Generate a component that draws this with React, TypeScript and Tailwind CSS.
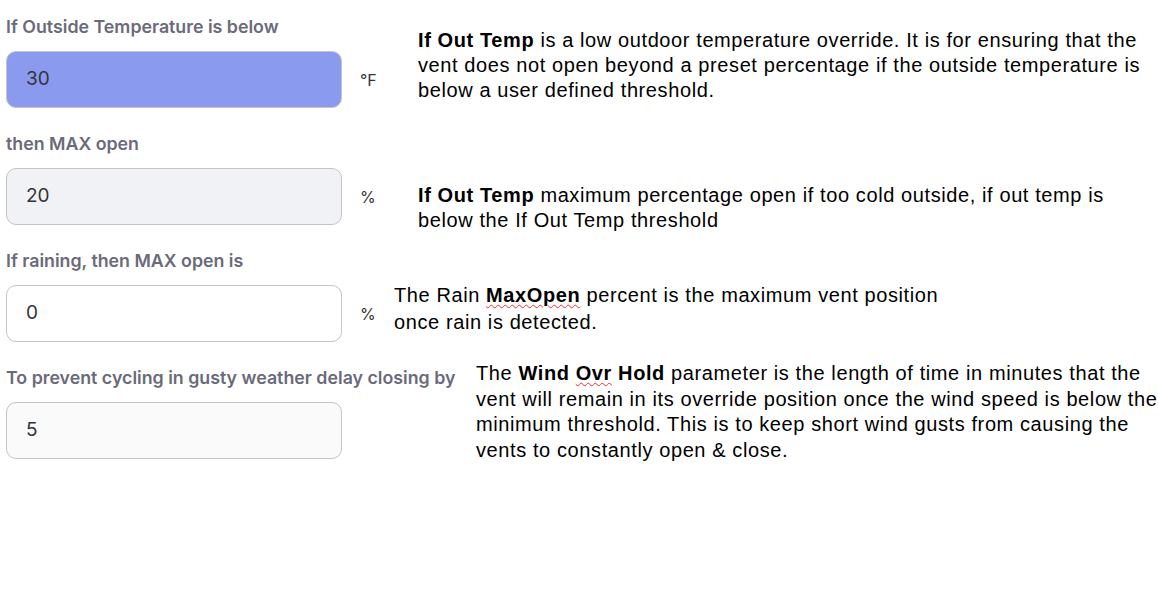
import React from 'react';

// Vent override settings with help notes beside each field
const inter = { fontFamily: 'Inter, "Noto Sans", sans-serif' };
const arial = { fontFamily: '"Liberation Sans", Arial, sans-serif' };

const Field = ({ label, value, unit, bg }: { label: string; value: string; unit?: string; bg: string }) => (
  <div style={inter}>
    <div className="text-[17.8px] leading-[20px] font-semibold text-[#6b6a7b] whitespace-nowrap">{label}</div>
    <div className="flex items-center mt-[14px]">
      <div className={`w-[336px] h-[57px] rounded-[10px] border border-[#c3c3c8] ${bg} flex items-center pl-[19px] text-[19px] text-[#333338]`}>
        {value}
      </div>
      {unit && <span className="ml-[18px] text-[16px] text-[#333338]">{unit}</span>}
    </div>
  </div>
);

const Wavy = ({ children }: { children: React.ReactNode }) => (
  <span className="underline decoration-wavy decoration-red-500 decoration-1 underline-offset-[2px]">{children}</span>
);

const note = 'text-[20px] tracking-[0.6px] text-black whitespace-nowrap';

export default function App() {
  return (
    <div className="w-[1158px] h-[615px] bg-white pl-[6px] pt-[17px]">
      {/* outside temp */}
      <div className="flex h-[91px]">
        <div className="w-[412px] shrink-0">
          <Field label="If Outside Temperature is below" value="30" unit="°F" bg="bg-[#8a9bef]" />
        </div>
        <p style={arial} className={`mt-[11px] leading-[25px] ${note}`}>
          <b>If Out Temp</b> is a low outdoor temperature override. It is for ensuring that the<br />
          vent does not open beyond a preset percentage if the outside temperature is<br />
          below a user defined threshold.
        </p>
      </div>

      {/* max open */}
      <div className="flex h-[91px] mt-[26px]">
        <div className="w-[412px] shrink-0">
          <Field label="then MAX open" value="20" unit="%" bg="bg-[#f1f2f6]" />
        </div>
        <p style={arial} className={`mt-[49px] leading-[25px] ${note}`}>
          <b>If Out Temp</b> maximum percentage open if too cold outside, if out temp is<br />
          below the If Out Temp threshold
        </p>
      </div>

      {/* rain */}
      <div className="flex h-[91px] mt-[26px]">
        <div className="w-[388px] shrink-0">
          <Field label="If raining, then MAX open is" value="0" unit="%" bg="bg-white" />
        </div>
        <p style={arial} className={`mt-[31px] leading-[27px] ${note}`}>
          The Rain <b><Wavy>MaxOpen</Wavy></b> percent is the maximum vent position<br />
          once rain is detected.
        </p>
      </div>

      {/* wind hold */}
      <div className="flex h-[91px] mt-[26px]">
        <div className="w-[470px] shrink-0">
          <Field label="To prevent cycling in gusty weather delay closing by" value="5" bg="bg-[#fafafa]" />
        </div>
        <p style={arial} className={`-mt-[7px] leading-[25.7px] ${note}`}>
          The <b>Wind <Wavy>Ovr</Wavy> Hold</b> parameter is the length of time in minutes that the<br />
          vent will remain in its override position once the wind speed is below the<br />
          minimum threshold. This is to keep short wind gusts from causing the<br />
          vents to constantly open &amp; close.
        </p>
      </div>
    </div>
  );
}
